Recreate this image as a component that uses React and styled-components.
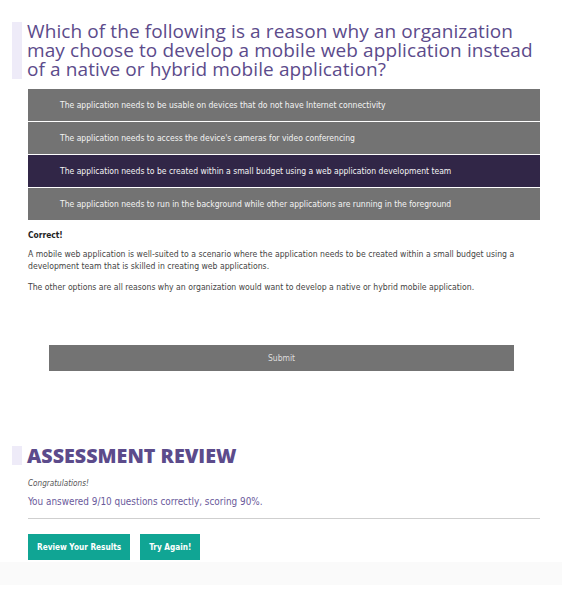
import React from 'react';
import styled, { createGlobalStyle } from 'styled-components';

const GlobalStyle = createGlobalStyle`
  body {
    margin: 0;
    background: #fff;
    font-family: "DejaVu Sans Condensed", "Liberation Sans", sans-serif;
  }
  * { box-sizing: border-box; }
`;

const options = [
  'The application needs to be usable on devices that do not have Internet connectivity',
  "The application needs to access the device's cameras for video conferencing",
  'The application needs to be created within a small budget using a web application development team',
  'The application needs to run in the background while other applications are running in the foreground'
];

const App = () => {
  const selected = 2;
  return (
    <Page>
      <GlobalStyle />
      <Question>
        <Accent />
        <QuestionTitle>
          Which of the following is a reason why an organization may choose to develop a mobile web application instead of a native or hybrid mobile application?
        </QuestionTitle>
      </Question>

      <Options>
        {options.map((text, i) => (
          <Option key={i} active={i === selected}>{text}</Option>
        ))}
      </Options>

      <Feedback>
        <FeedbackTitle>Correct!</FeedbackTitle>
        <FeedbackText>
          A mobile web application is well-suited to a scenario where the application needs to be created within a small budget using a development team that is skilled in creating web applications.
        </FeedbackText>
        <FeedbackText>
          The other options are all reasons why an organization would want to develop a native or hybrid mobile application.
        </FeedbackText>
      </Feedback>

      <SubmitButton>Submit</SubmitButton>

      <Review>
        <ReviewHeader>
          <SmallAccent />
          <ReviewTitle>Assessment Review</ReviewTitle>
        </ReviewHeader>
        <Congrats>Congratulations!</Congrats>
        <Score>You answered 9/10 questions correctly, scoring 90%.</Score>
        <Divider />
        <Actions>
          <ActionButton>Review Your Results</ActionButton>
          <ActionButton>Try Again!</ActionButton>
        </Actions>
      </Review>
      <Footer />
    </Page>
  );
};

const Page = styled.div`
  width: 562px;
  padding-top: 22px;
`;

const Question = styled.div`
  display: flex;
  align-items: stretch;
  padding-left: 12px;
  gap: 5px;
`;

const Accent = styled.div`
  width: 10px;
  background: #eeebf8;
  flex-shrink: 0;
`;

const QuestionTitle = styled.h2`
  margin: 0;
  width: 520px;
  font-family: "Open Sans", "Noto Sans", sans-serif;
  font-weight: 400;
  font-size: 19px;
  line-height: 19px;
  letter-spacing: 0.1px;
  color: #5c4b8b;
`;

const Options = styled.div`
  display: flex;
  flex-direction: column;
  gap: 1px;
  margin: 10px 22px 0 28px;
`;

const Option = styled.div`
  height: 32px;
  display: flex;
  align-items: center;
  padding-left: 32px;
  font-size: 8.5px;
  color: #f4f4f4;
  background: ${p => (p.active ? '#312647' : '#737373')};
`;

const Feedback = styled.div`
  margin: 9px 22px 0 28px;
`;

const FeedbackTitle = styled.div`
  font-size: 8.4px;
  font-weight: 700;
  line-height: 12px;
  color: #222;
`;

const FeedbackText = styled.p`
  margin: 7px 0 0;
  font-size: 8.6px;
  line-height: 12px;
  color: #444;

  & + & {
    margin-top: 9px;
  }
`;

const SubmitButton = styled.div`
  margin: 52px 48px 0 49px;
  height: 26px;
  display: flex;
  align-items: center;
  justify-content: center;
  background: #737373;
  color: #ddd;
  font-size: 8.5px;
`;

const Review = styled.div`
  margin-top: 75px;
`;

const ReviewHeader = styled.div`
  display: flex;
  align-items: stretch;
  gap: 5px;
  padding-left: 12px;
`;

const SmallAccent = styled(Accent)`
  height: 19px;
`;

const ReviewTitle = styled.h2`
  margin: 0;
  font-family: "Open Sans", "Noto Sans", sans-serif;
  font-weight: 800;
  font-size: 19.7px;
  line-height: 19px;
  text-transform: uppercase;
  color: #5c4b8b;
`;

const Congrats = styled.div`
  margin: 12px 0 0 28px;
  font-size: 8.1px;
  line-height: 12px;
  font-style: italic;
  color: #555;
`;

const Score = styled.div`
  margin: 6px 0 0 28px;
  font-size: 9.9px;
  line-height: 14px;
  color: #6a5a9b;
`;

const Divider = styled.hr`
  margin: 9px 22px 0 28px;
  border: none;
  border-top: 1px solid #cfcfcf;
`;

const Actions = styled.div`
  display: flex;
  gap: 10px;
  margin: 15px 0 0 28px;
`;

const ActionButton = styled.button`
  height: 26px;
  padding: 0 9px;
  border: none;
  background: #10a594;
  color: #fff;
  font-family: inherit;
  font-weight: 700;
  font-size: 8.2px;
`;

const Footer = styled.div`
  margin-top: 2px;
  height: 23px;
  background: #fafafa;
`;

export default App;
